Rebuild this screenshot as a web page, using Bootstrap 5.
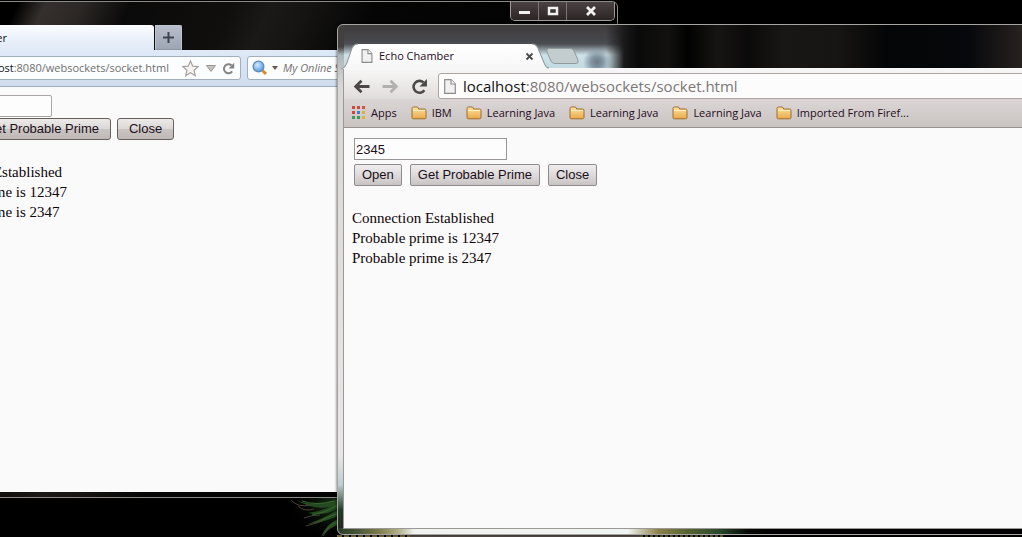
<!DOCTYPE html>
<html lang="en">
<head>
<meta charset="utf-8">
<meta name="viewport" content="width=device-width, initial-scale=1">
<title>Echo Chamber</title>
<link rel="stylesheet" href="https://cdn.jsdelivr.net/npm/bootstrap@5.3.0/dist/css/bootstrap.min.css">
<style>
  body { background: #000; font-family: "Open Sans", "Noto Sans", sans-serif; font-size: 11px; line-height: 16px; color: #1c0f18; }
  .desktop { background: #000; }
  .wallpaper { left: 0; bottom: 0; height: 46px; width: 760px; }
  .win { border: 1px solid #8d8984; }

  /* window behind */
  .win-back { left: -96px; top: 1px; width: 714px; height: 497px; border-radius: 0 6px 0 0; padding: 0 2px 5px 5px;
    background: linear-gradient(115deg, #000 12%, #35302d 15%, #2b2725 19%, #0b0a0a 24%, #100f0e 35%, #1b1917 39%, #151412 43%, #050506 50%, #020203 76%, #3b302f 84%, #41393a 100%); }
  .caption-row { height: 23px; }
  .caption-box { height: 19px; border: 1px solid #a09a98; border-top: 0; border-radius: 0 0 5px 5px; background: #332c2d; overflow: hidden; }
  .caption-box button { border: 0; border-right: 1px solid #7b7374; background: linear-gradient(#4a4142, #2c2526); padding: 0; height: 18px; width: 28px; display: flex; align-items: center; justify-content: center; }
  .caption-box button:last-child { width: 47px; border-right: 0; }
  .fx-tab { width: 244px; height: 25px; border-radius: 3px 3px 0 0; background: linear-gradient(#fbfdff, #eaf0fa 60%, #dfe9f6); color: #111; }
  .fx-tab a { color: #111; text-decoration: none; width: 97px; text-align: right; }
  .fx-plus { width: 27px; height: 25px; border: 1px solid #c0c6d0; border-bottom-color: #8f95a0; background: linear-gradient(#b8bfcb, #9fa6b3); padding: 0; border-radius: 0 2px 0 0; margin-left: 1px; }
  .fx-nav { height: 37px; background: linear-gradient(#dfe9f7, #cfdded); border-bottom: 1px solid #9fabbb; padding: 6px 0; }
  .fx-field { height: 24px; border: 1px solid #a3aebd; border-radius: 3px; background: #fcfdff; }
  .fx-url { width: 331px; padding-right: 5px; }
  .fx-url .addr { color: #70706e; width: 258px; text-align: right; white-space: nowrap; }
  .fx-search { margin-left: 6px; }
  .fx-search input { border: 0; background: transparent; font-style: italic; color: #666; padding: 0; width: 150px; outline: 0; }
  .fx-search input::placeholder { color: #73716f; opacity: 1; }
  .host { color: #111; }
  .page { background: #fbfafb; font-family: "Liberation Serif", "Times New Roman", serif; font-size: 15px; line-height: 20px; color: #0d0408; min-height: 0; }
  .page input { border: 1px solid #9b9698; background: #fefdfe; font-family: "Liberation Sans", Arial, sans-serif; font-size: 13px; line-height: 16px; color: #1c0f18; padding: 2px 1px; width: 153px; height: 22px; outline: 0; display: block; }
  .page button { border: 1px solid #8f8a8b; border-radius: 2px; background: linear-gradient(#efedee, #dcd8d9 55%, #c9c4c4); font-family: "Liberation Sans", Arial, sans-serif; font-size: 13px; line-height: 16px; color: #1c0f18; padding: 2px 7px; height: 22px; white-space: nowrap; }
  .result { margin-top: 22px; }
  .page-back { padding: 8px 1px; }
  .page-back .result { padding-left: 9px; }
  .page-back button { border-color: #67605f; border-radius: 3px; background: linear-gradient(#ece9e9 0, #dcd8d8 48%, #c9c4c3 52%, #bfb8b6); padding: 2px 11px; }
  .page-back input { border-radius: 2px; border-color: #aaa5a6; width: 141px; }
  .back-buttons { gap: 6px; margin-top: 1px; }

  /* window in front */
  .win-front { left: 337px; right: -12px; top: 24px; bottom: 2px; border-radius: 6px; padding: 0 5px 5px;
    border-color: #a7a5a2; box-shadow: 0 0 3px rgba(0, 0, 0, .7);
    background:
      linear-gradient(90deg, #273a25 0, #47573a 20px, #7d7a48 40px, #afae86 60px, #f0f2ef 76px, #f0f4f2 290px, #8d8149 320px, #556332 350px, #2b4a2c 380px, #050705 410px, #000 430px) 0 100% / 100% 6px no-repeat,
      linear-gradient(#444040 0, #45403f 22px, #a9b6b9 30px, #d9d6d6 60px, #e8e6e6 430px, #bccdd0 460px, #263a27 485px, #222 100%) 0 0 / 6px 100% no-repeat,
      radial-gradient(circle at 259px 37px, #6d7a86 0, #8296a3 6px, transparent 14px),
      linear-gradient(90deg, transparent 0, transparent 268px, #1a1919 286px, #0a0a0a 300px, #121110 330px, #020202 350px, #171513 380px, #0b0a0a 410px, #191715 445px, #171513 500px, #040506 550px, #07080b 630px, #2b2422 690px),
      linear-gradient(#403b3c 0, #46474b 14px, #4b4d52 19px, #cfe1e8 30px, #c4dbe2 42px, #c4dbe2 100%); }
  .tabs-row { height: 43px; padding-top: 18px; }
  .cr-tab-wrap { width: 208px; height: 25px; margin-left: -2px; }
  .cr-tab-wrap > svg { left: 0; top: 0; }
  .cr-tab { padding: 1px 15px 0 20px; height: 25px; }
  .cr-tab a { color: #260b22; text-decoration: none; margin-left: 2px; }
  .bare { border: 0; background: transparent; padding: 0; line-height: 0; }
  .cr-new { margin: 5px 0 0 -3px; }
  .cr-body { border: 1px solid #9b9896; border-top: 0; background: #fbfafb; min-height: 0; }
  .cr-tools { height: 31px; background: linear-gradient(#f8f7f7, #e0dcdb); padding: 4px 0 0 9px; border-top: 1px solid #f7f6f6; }
  .cr-tools .arrow { width: 29px; text-align: left; }
  .cr-omni { height: 26px; border: 1px solid #aaa5a3; border-radius: 3px 0 0 3px; background: #fdfcfd; padding-left: 5px; font-size: 15px; line-height: 20px; color: #7c7775; margin-left: -2px; gap: 7px; }
  .cr-marks { height: 29px; background: linear-gradient(#dbd6d5, #c9c4c2); border-bottom: 1px solid #96918f; padding: 0 0 1px 7px; gap: 14px; }
  .cr-marks a { color: #260b22; text-decoration: none; white-space: nowrap; gap: 5px; }
  .page-front { padding: 10px 8px; }
  .page-front .controls { padding-left: 2px; }
  .front-buttons { gap: 8px; }
</style>
</head>
<body>
<svg width="0" height="0" class="position-absolute" aria-hidden="true">
  <defs>
    <linearGradient id="gold" x1="0" y1="0" x2="0" y2="1"><stop offset="0" stop-color="#ffe3a0"/><stop offset="1" stop-color="#e9a94a"/></linearGradient>
    <linearGradient id="tabfill" x1="0" y1="0" x2="0" y2="1"><stop offset="0" stop-color="#ffffff"/><stop offset="1" stop-color="#f8f7f7"/></linearGradient>
    <radialGradient id="lens" cx=".4" cy=".35" r=".7"><stop offset="0" stop-color="#d5ecff"/><stop offset="1" stop-color="#4a94d8"/></radialGradient>
    <radialGradient id="leafglow" cx=".95" cy=".2" r=".9"><stop offset="0" stop-color="#1c3a1b"/><stop offset="1" stop-color="#000" stop-opacity="0"/></radialGradient>
    <symbol id="folder" viewBox="0 0 16 14"><path d="M1 2.5Q1 1 2.5 1H6Q7 1 7.3 2L7.6 3H13.5Q15 3 15 4.5V11.500Q15 12.800 13.700 12.800H2.300Q1 12.800 1 11.500Z" fill="url(#gold)" stroke="#a06c2c"/><path d="M2 4.500H14" stroke="#fff0c4"/></symbol>
    <symbol id="sheet" viewBox="0 0 12 15"><path d="M.7.7H7L11.300 5V14.300H.7Z" fill="#f2f1f1" stroke="#8d8a8a" stroke-width="1.200"/><path d="M7 .7V5H11.300" fill="#fff" stroke="#8d8a8a" stroke-width="1.200"/></symbol>
    <symbol id="reload" viewBox="0 0 16 16"><path d="M12.600 11.500A5.600 5.600 0 1 1 11.800 4.200" fill="none" stroke="currentColor" stroke-width="2.400"/><path d="M15 1V8H8Z" fill="currentColor"/></symbol>
    <symbol id="arrow" viewBox="0 0 16 14"><path d="M8 1.500L2.500 7L8 12.500M3 7H15.500" fill="none" stroke="currentColor" stroke-width="2.600"/></symbol>
  </defs>
</svg>

<main class="desktop position-relative overflow-hidden vh-100">
  <!-- wallpaper foliage -->
  <svg class="wallpaper position-absolute" viewBox="0 0 760 46" fill="none" aria-hidden="true">
    <rect x="285" y="7" width="55" height="39" fill="url(#leafglow)"/>
    <g fill="#234a20"><path d="M296 9Q315 17 338 8V13Q318 22 296 9ZM308 22Q326 20 338 11V17Q324 26 308 22ZM308 33Q322 28 338 19V25Q322 32 308 33ZM321 46Q326 33 338 28V34Q330 36 321 46Z"/></g>
    <g stroke="#3a672f"><path d="M302 10Q316 15 334 10M312 24Q326 22 338 14M316 32Q328 26 338 22M325 42Q328 34 338 31"/></g>
    <g stroke="#4a4034"><path d="M291 9Q298 17 310 14M298 15Q304 21 314 18M304 27Q311 24 320 24M306 35Q314 33 322 30M323 45Q326 38 334 35"/></g>
    <path d="M337 45H410" stroke="#756a36" stroke-width="2" stroke-dasharray="5 2"/>
    <path d="M410 45H640" stroke="#554d4a" stroke-width="2"/>
    <path d="M640 45H725" stroke="#5f6025" stroke-width="2" stroke-dasharray="3 2"/>
  </svg>

  <section class="win win-back position-absolute d-flex flex-column" aria-label="Firefox window">
    <div class="caption-row d-flex justify-content-end flex-shrink-0">
      <div class="caption-box d-flex">
        <button type="button" aria-label="Minimize"><svg width="13" height="10"><rect x="1" y="5" width="11" height="3" fill="#f2f0f0"/></svg></button>
        <button type="button" aria-label="Maximize"><svg width="12" height="10"><rect x="2" y="2" width="8" height="6" fill="none" stroke="#f2f0f0" stroke-width="2.500"/></svg></button>
        <button type="button" aria-label="Close"><svg width="12" height="10"><path d="M2 1L10 9M10 1L2 9" stroke="#f2f0f0" stroke-width="2.800"/></svg></button>
      </div>
    </div>
    <div class="d-flex flex-shrink-0">
      <div class="fx-tab d-flex align-items-center"><a href="#">Echo Chamber</a></div>
      <button type="button" class="fx-plus d-flex align-items-center justify-content-center" aria-label="New tab"><svg width="11" height="11"><path d="M5.500 0V11M0 5.500H11" stroke="#3f444e" stroke-width="2"/></svg></button>
    </div>
    <div class="fx-nav d-flex flex-shrink-0">
      <div class="fx-field fx-url d-flex align-items-center justify-content-between">
        <span class="addr"><span class="host">localhost</span>:8080/websockets/socket.html</span>
        <button type="button" class="bare ms-2" aria-label="Bookmark"><svg width="17" height="17" viewBox="0 0 17 17"><path d="M8.500 1L10.700 6.200L16.200 6.600L12 10.200L13.300 15.700L8.500 12.700L3.700 15.700L5 10.200L.8 6.600L6.300 6.200Z" fill="#f6f5f4" stroke="#a8a19c" stroke-width="1.200"/></svg></button>
        <button type="button" class="bare" aria-label="History"><svg width="12" height="9"><path d="M1.500 1.500H10.500L6 7.500Z" fill="#c4c1bf" stroke="#9c9997"/></svg></button>
        <button type="button" class="bare" aria-label="Reload"><svg width="13" height="13" color="#858382"><use href="#reload"/></svg></button>
      </div>
      <div class="fx-field fx-search d-flex align-items-center flex-grow-1 ps-1">
        <svg width="16" height="16" viewBox="0 0 16 16" class="flex-shrink-0"><path d="M10.500 10.500L14 14" stroke="#d88d2c" stroke-width="3"/><circle cx="6.500" cy="6.500" r="5.400" fill="url(#lens)" stroke="#5d8dbd" stroke-width="1.300"/></svg>
        <svg width="7" height="4" class="ms-1 me-1 flex-shrink-0"><path d="M0 0H6L3 4Z" fill="#65574c"/></svg>
        <input type="text" placeholder="My Online Search" aria-label="Search">
      </div>
    </div>
    <div class="page page-back flex-grow-1">
      <div class="controls">
        <input type="text" aria-label="Number">
        <div class="back-buttons d-flex">
          <button type="button">Open</button>
          <button type="button">Get Probable Prime</button>
          <button type="button">Close</button>
        </div>
      </div>
      <div class="result">Connection Established<br>Probable prime is 12347<br>Probable prime is 2347</div>
    </div>
  </section>

  <section class="win win-front position-absolute d-flex flex-column" aria-label="Chrome window">
    <div class="tabs-row d-flex flex-shrink-0">
      <div class="cr-tab-wrap position-relative">
        <svg class="position-absolute" width="208" height="26" viewBox="0 0 208 25" preserveAspectRatio="none"><path d="M0 25Q4 24 6 19L11 5Q13 1 17 1H191Q195 1 197 5L203 19Q205 24 208 24V25Z" fill="url(#tabfill)"/><path d="M0 25Q4 24 6 19L11 5Q13 1 17 1M191 1Q195 1 197 5L203 19Q205 24 208 24" fill="none" stroke="#8e9698"/></svg>
        <div class="cr-tab position-relative d-flex align-items-center">
          <svg width="12" height="14" class="me-1"><use href="#sheet"/></svg>
          <a href="#">Echo Chamber</a>
          <button type="button" class="bare ms-auto" aria-label="Close tab"><svg width="9" height="9"><path d="M1.500 1.500L7.500 7.500M7.500 1.500L1.500 7.500" stroke="#4b4848" stroke-width="1.800"/></svg></button>
        </div>
      </div>
      <button type="button" class="bare cr-new align-self-start" aria-label="New tab"><svg width="34" height="16" viewBox="0 0 34 16"><path d="M3 .5H24Q27 .5 28 3L32 12Q33 15.500 30 15.500H9Q6 15.500 5 13L1 4Q0 .5 3 .5Z" fill="#c3cccf" stroke="#929a9c"/></svg></button>
    </div>
    <div class="cr-body d-flex flex-column flex-grow-1">
      <div class="cr-tools d-flex flex-shrink-0">
        <button type="button" class="bare arrow" aria-label="Back"><svg width="17" height="15" color="#4c4848"><use href="#arrow"/></svg></button>
        <button type="button" class="bare arrow" aria-label="Forward"><svg width="17" height="15" color="#b3afae"><use href="#arrow" transform="translate(17 0) scale(-1 1)"/></svg></button>
        <button type="button" class="bare arrow" aria-label="Reload"><svg width="17" height="17" color="#4c4848"><use href="#reload"/></svg></button>
        <div class="cr-omni d-flex align-items-center flex-grow-1">
          <svg width="12" height="15"><use href="#sheet"/></svg>
          <span><span class="host">localhost</span>:8080/websockets/socket.html</span>
        </div>
      </div>
      <nav class="cr-marks d-flex align-items-center flex-shrink-0" aria-label="Bookmarks">
        <a href="#" class="d-flex align-items-center"><svg width="15" height="14" viewBox="0 0 15 14"><g><path d="M1 0h3v3H1zM6 0h3v3H6zM1 5h3v3H1z" fill="#d0483c"/><path d="M11 0h3v3h-3z" fill="#c9574a"/><path d="M6 5h3v3H6z" fill="#3f7fd0"/><path d="M11 5h3v3h-3zM11 10h3v3h-3z" fill="#e2ac3c"/><path d="M1 10h3v3H1zM6 10h3v3H6z" fill="#3e9a5b"/></g></svg>Apps</a>
        <a href="#" class="d-flex align-items-center"><svg width="16" height="14"><use href="#folder"/></svg>IBM</a>
        <a href="#" class="d-flex align-items-center"><svg width="16" height="14"><use href="#folder"/></svg>Learning Java</a>
        <a href="#" class="d-flex align-items-center"><svg width="16" height="14"><use href="#folder"/></svg>Learning Java</a>
        <a href="#" class="d-flex align-items-center"><svg width="16" height="14"><use href="#folder"/></svg>Learning Java</a>
        <a href="#" class="d-flex align-items-center"><svg width="16" height="14"><use href="#folder"/></svg>Imported From Firef...</a>
      </nav>
      <div class="page page-front flex-grow-1">
        <div class="controls">
          <input type="text" value="2345" aria-label="Number">
          <div class="front-buttons d-flex mt-1">
            <button type="button">Open</button>
            <button type="button">Get Probable Prime</button>
            <button type="button">Close</button>
          </div>
        </div>
        <div class="result">Connection Established<br>Probable prime is 12347<br>Probable prime is 2347</div>
      </div>
    </div>
  </section>
</main>
<script src="https://cdn.jsdelivr.net/npm/bootstrap@5.3.0/dist/js/bootstrap.bundle.min.js"></script>
</body>
</html>
